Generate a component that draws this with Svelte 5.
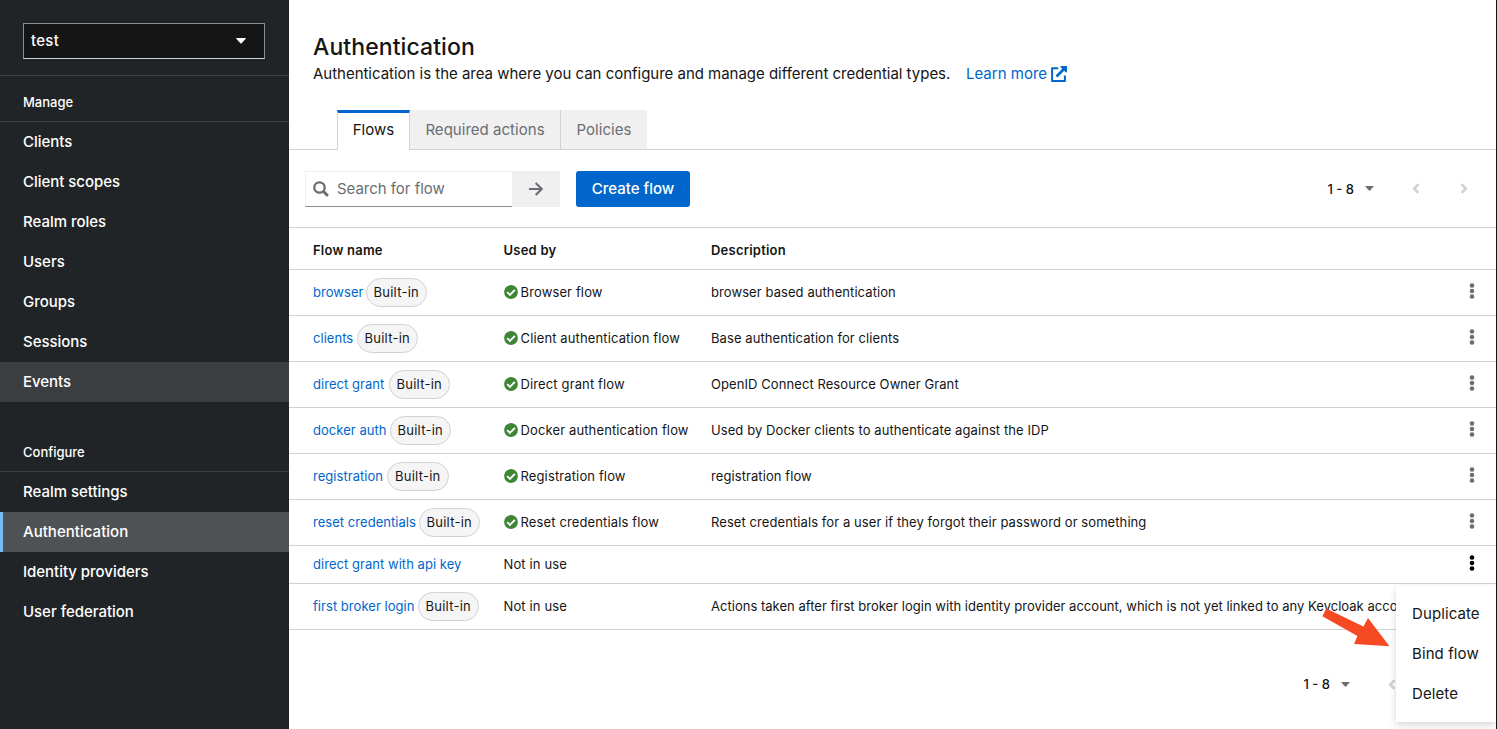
<script>
  const manage = ['Clients', 'Client scopes', 'Realm roles', 'Users', 'Groups', 'Sessions', 'Events'];
  const configure = ['Realm settings', 'Authentication', 'Identity providers', 'User federation'];
  const flows = [
    { name: 'browser', width: 49.5, builtIn: true, usedBy: 'Browser flow', description: 'browser based authentication' },
    { name: 'clients', width: 40.5, builtIn: true, usedBy: 'Client authentication flow', description: 'Base authentication for clients' },
    { name: 'direct grant', width: 72.5, builtIn: true, usedBy: 'Direct grant flow', description: 'OpenID Connect Resource Owner Grant' },
    { name: 'docker auth', width: 73.5, builtIn: true, usedBy: 'Docker authentication flow', description: 'Used by Docker clients to authenticate against the IDP' },
    { name: 'registration', width: 71, builtIn: true, usedBy: 'Registration flow', description: 'registration flow' },
    { name: 'reset credentials', width: 102.5, builtIn: true, usedBy: 'Reset credentials flow', description: 'Reset credentials for a user if they forgot their password or something' },
    { name: 'direct grant with api key', width: 148, builtIn: false, usedBy: '', description: '' },
    { name: 'first broker login', width: 101.5, builtIn: true, usedBy: '', description: 'Actions taken after first broker login with identity provider account, which is not yet linked to any Keycloak account' }
  ];
  const openRow = 6;
</script>

{#snippet pager()}
  <span class="range">1 - 8</span>
  <svg class="caret" width="9" height="5" viewBox="0 0 9 5"><path d="M.6 0h7.8q.6 0 .2.6L5 4.6q-.5.5-1 0L.4.6Q0 0 .6 0z" fill="#6a6e73" /></svg>
  <svg class="prev" width="8" height="11" viewBox="0 0 8 11"><path d="M6.5 1.2 2.2 5.5l4.3 4.3" fill="none" stroke="#d2d2d2" stroke-width="2.5" /></svg>
  <svg class="next" width="8" height="11" viewBox="0 0 8 11"><path d="m1.5 1.2 4.3 4.3-4.3 4.3" fill="none" stroke="#d2d2d2" stroke-width="2.5" /></svg>
{/snippet}

<div class="page">
  <aside>
    <div class="realm">
      <button class="select">
        <span>test</span>
        <svg width="10" height="6" viewBox="0 0 10 6"><path d="M.6 0h8.8q.8 0 .3.7L5.6 5.2q-.6.6-1.2 0L.3.7Q-.2 0 .6 0z" fill="#fff" /></svg>
      </button>
    </div>
    <nav>
      <h2>Manage</h2>
      {#each manage as item}
        <a class:hover={item === 'Events'}>{item}</a>
      {/each}
    </nav>
    <nav class="second">
      <h2>Configure</h2>
      {#each configure as item}
        <a class:current={item === 'Authentication'}>{item}</a>
      {/each}
    </nav>
  </aside>

  <main>
    <header>
      <h1>Authentication</h1>
      <p>
        <span class="lead">Authentication is the area where you can configure and manage different credential types.</span>
        <a class="learn">Learn more</a>
        <svg width="16" height="16" viewBox="0 0 16 16">
          <path d="M7.2 2.2H1.1v12.7h12.8V9.5" fill="none" stroke="#06c" stroke-width="2" stroke-linejoin="round" />
          <path d="M5.5 10.5 13 3" stroke="#06c" stroke-width="2.6" />
          <path d="M9.8 0h5.7q.5 0 .5.5v5.7l-1 .4L9.4 1z" fill="#06c" />
        </svg>
      </p>
    </header>

    <div class="tabs">
      <button class="tab active">Flows</button>
      <button class="tab required">Required actions</button>
      <button class="tab policies">Policies</button>
    </div>

    <div class="toolbar">
      <div class="search">
        <svg width="16" height="16" viewBox="0 0 16 16"><circle cx="6.5" cy="6.5" r="5.2" fill="none" stroke="#6a6e73" stroke-width="2.3" /><path d="m10.5 10.5 4.4 4.4" stroke="#6a6e73" stroke-width="2.9" /></svg>
        <span>Search for flow</span>
      </div>
      <button class="go">
        <svg width="14" height="14" viewBox="0 0 14 14"><path d="M0 7h12.2M6.7 1l6 6-6 6" fill="none" stroke="#6a6e73" stroke-width="2.1" /></svg>
      </button>
      <button class="create">Create flow</button>
      <div class="pager">{@render pager()}</div>
    </div>

    <div class="table">
      <div class="row head">
        <span>Flow name</span><span>Used by</span><span>Description</span>
      </div>
      {#each flows as flow, i}
        <div class="row" class:short={!flow.builtIn}>
          <div class="name">
            <a style="width: {flow.width}px">{flow.name}</a>
            {#if flow.builtIn}<span class="badge">Built-in</span>{/if}
          </div>
          <div class="used">
            {#if flow.usedBy}
              <svg width="14" height="14" viewBox="0 0 14 14"><circle cx="7" cy="7" r="6.9" fill="#3e8635" /><path d="m3.2 7.2 2.7 2.7 5-5" fill="none" stroke="#fff" stroke-width="1.9" /></svg>
              <span>{flow.usedBy}</span>
            {:else}
              <span>Not in use</span>
            {/if}
          </div>
          <div class="description" class:long={i === 7}>{flow.description}</div>
          <svg class="kebab" class:open={i === openRow} width="6" height="16" viewBox="0 0 6 16"><circle cx="3" cy="2.5" r="2.3" /><circle cx="3" cy="8" r="2.3" /><circle cx="3" cy="13.5" r="2.3" /></svg>
        </div>
      {/each}
    </div>
    <div class="pager bottom">{@render pager()}</div>
  </main>

  <div class="edge"></div>

  <div class="menu">
    <span>Duplicate</span>
    <span>Bind flow</span>
    <span>Delete</span>
  </div>
  <svg class="arrow" width="70" height="42" viewBox="0 0 70 42"><path d="M6.2 2.4 43.5 20.5 48 12 69.5 40.3 34 38 37.4 30 2.4 10.2z" fill="#f64a24" /></svg>
</div>

<style>
  :global(body) { background: #fff; }
  .page {
    position: relative;
    display: flex;
    width: 1497px;
    height: 729px;
    overflow: hidden;
    font-family: Inter, sans-serif;
    color: #151515;
    font-size: 15px;
    line-height: 24px;
  }
  .page * { box-sizing: border-box; }
  .page svg { flex: none; display: block; }
  button { margin: 0; padding: 0; border: 0; font: inherit; color: inherit; }
  h1, h2, p { margin: 0; font-weight: 400; }
  a { color: #06c; }

  aside { width: 289px; flex: none; background: #212427; color: #fff; }
  .realm { height: 76px; padding: 23px 24px 0 23px; border-bottom: 1px solid #3c3f42; }
  .select {
    display: flex;
    align-items: center;
    justify-content: space-between;
    width: 242px;
    height: 36px;
    padding: 0 18px 0 7px;
    border: 1px solid #8a8d90;
    border-bottom-color: #d2d2d2;
    background: #151515;
    font-weight: 500;
    letter-spacing: 0.3px;
  }
  nav h2 {
    height: 46px;
    padding: 14px 23px 0;
    border-bottom: 1px solid #3c3f42;
    font-size: 13px;
    font-weight: 500;
  }
  nav.second { padding-top: 24px; }
  nav a { display: block; height: 40px; padding: 8px 23px; color: #fff; font-weight: 500; letter-spacing: -0.03px; }
  nav a.hover { background: #3c3d40; }
  nav a.current { padding-left: 20px; border-left: 3px solid #73bcf7; background: #4f5255; letter-spacing: 0.03px; }

  main { display: flex; flex-direction: column; width: 1207px; flex: none; }
  header { height: 110px; padding: 31px 24px 0; }
  h1 { height: 31px; padding-top: 1px; font-size: 23px; line-height: 31px; font-weight: 500; letter-spacing: 0.08px; }
  header p { display: flex; align-items: center; height: 24px; white-space: nowrap; }
  .lead { width: 653px; letter-spacing: -0.02px; }
  .learn { width: 85px; }

  .tabs { display: flex; height: 40px; padding-left: 48px; box-shadow: inset 0 -1px #d2d2d2; }
  .tab { height: 39px; background: #f0f0f0; color: #6a6e73; text-align: center; letter-spacing: 0.03px; }
  .tab.active { width: 73px; height: 40px; border: 1px solid #d2d2d2; border-width: 3px 1px 0; border-top-color: #06c; background: #fff; color: #151515; padding-bottom: 3px; }
  .required { width: 151px; border-right: 1px solid #d2d2d2; }
  .policies { width: 86px; }

  .toolbar { display: flex; align-items: center; height: 77px; padding-left: 16px; }
  .search { display: flex; align-items: center; gap: 8px; width: 207px; height: 36px; padding-left: 7px; border: 1px solid #f0f0f0; border-width: 1px 0 1px 1px; border-bottom-color: #8a8d90; color: #6a6e73; letter-spacing: -0.03px; }
  .go { display: flex; align-items: center; justify-content: center; width: 48px; height: 36px; background: #f0f0f0; }
  .create { width: 114px; height: 36px; margin-left: 16px; border-radius: 3px; background: #06c; color: #fff; font-weight: 500; }
  .pager { display: flex; align-items: center; margin-left: auto; padding-right: 28px; }
  .range { width: 37.5px; font-size: 13px; font-weight: 500; }
  .prev { margin-left: 38px; }
  .next { margin-left: 40px; }
  .pager.bottom { padding: 42px 52px 0 0; }

  .table { border-top: 1px solid #d2d2d2; font-size: 13px; line-height: 21px; letter-spacing: 0.08px; }
  .row {
    display: grid;
    grid-template-columns: 190.5px 207.5px 1fr 6px;
    align-items: center;
    height: 46px;
    padding: 0 21px 0 24px;
    border-bottom: 1px solid #d2d2d2;
    white-space: nowrap;
  }
  .row.head { height: 42px; padding-top: 3px; font-weight: 600; letter-spacing: 0.22px; }
  .row.short { height: 38px; }
  .name, .used { display: flex; align-items: center; }
  .name { gap: 3px; }
  .name a { letter-spacing: 0.04px; }
  .used { letter-spacing: 0.13px; }
  .used svg { margin: -2px 3px 0 0; }
  .badge { height: 29px; width: 61.5px; padding-top: 3px; border: 1px solid #d2d2d2; border-radius: 15px; background: #f5f5f5; text-align: center; letter-spacing: 0.25px; }
  .description { min-width: 0; overflow: hidden; }
  .description.long { letter-spacing: 0.02px; }
  .kebab { fill: #6a6e73; margin-top: -4px; }
  .kebab.open { fill: #000; }

  .edge { width: 1px; background: #151515; }
  .menu {
    position: absolute;
    left: 1396px;
    top: 586px;
    width: 100px;
    height: 136px;
    padding: 8px 0;
    background: #fff;
    box-shadow: 0 4px 8px rgba(3, 3, 3, 0.12), 0 0 4px rgba(3, 3, 3, 0.06);
    letter-spacing: 0.1px;
  }
  .menu span { display: block; height: 40px; padding: 8px 16px; white-space: nowrap; }
  .arrow { position: absolute; left: 1320px; top: 606px; }
</style>
